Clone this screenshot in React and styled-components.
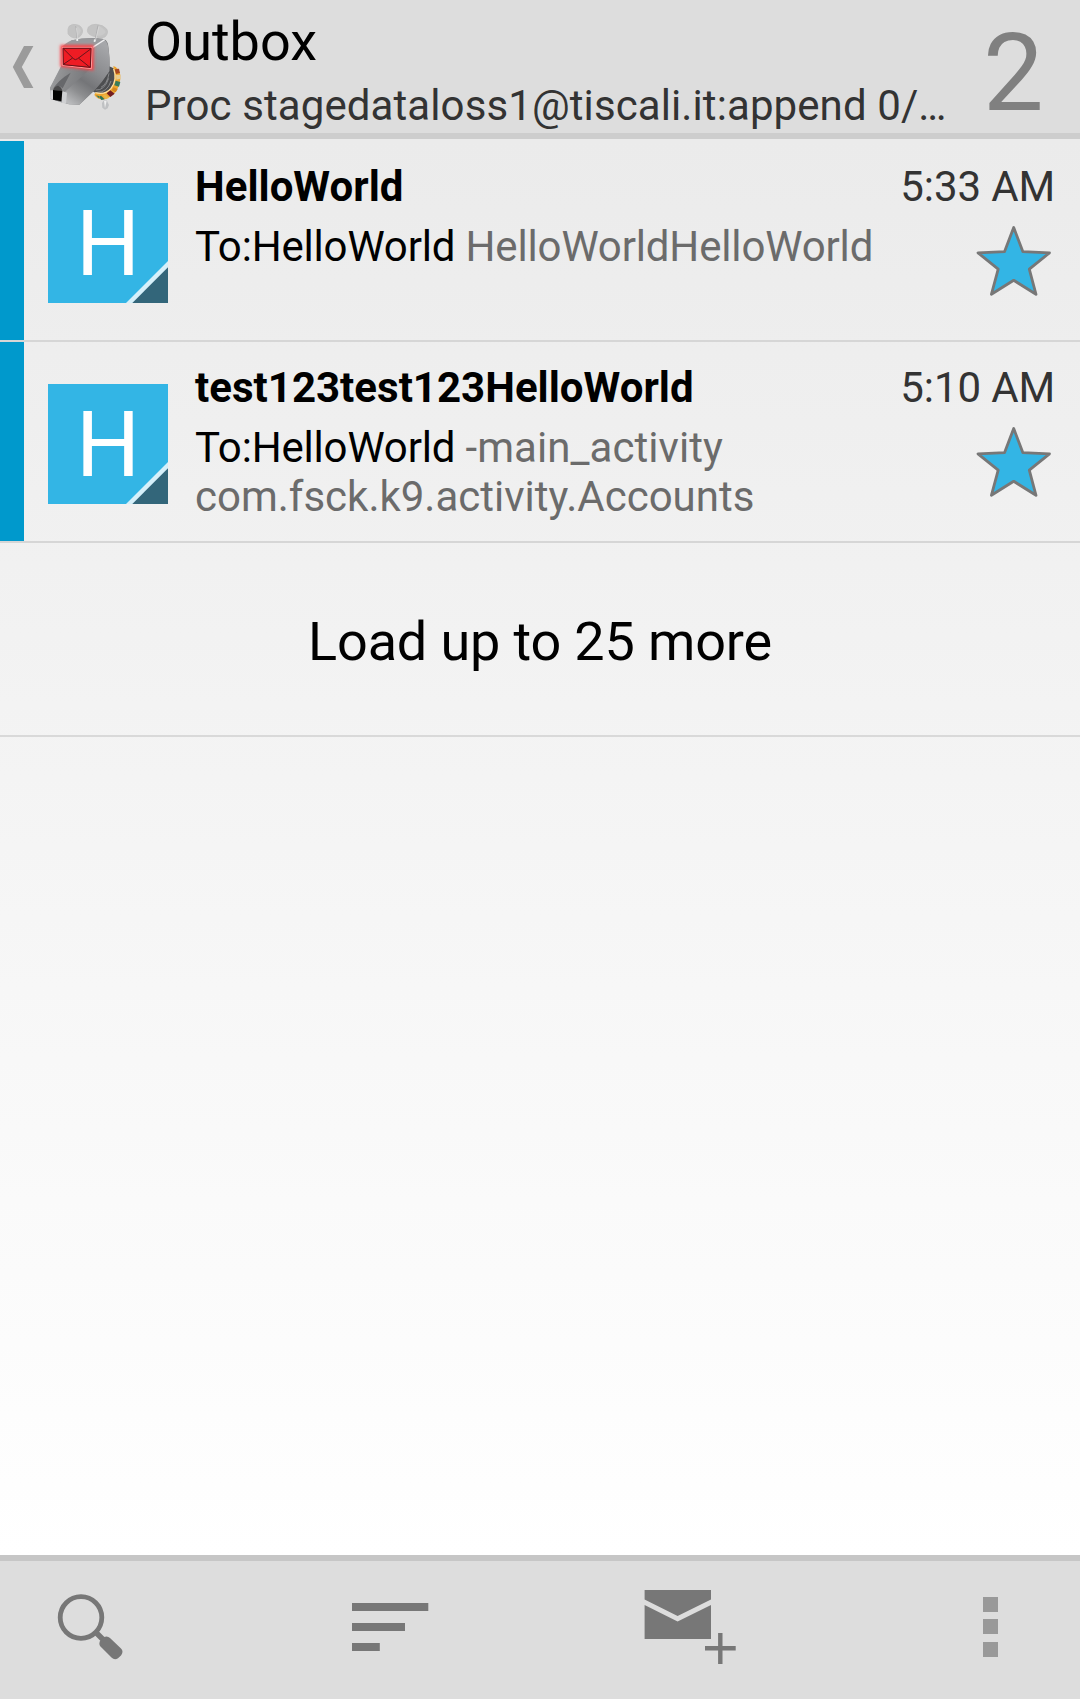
import React from "react";
import styled, { createGlobalStyle } from "styled-components";

const GlobalStyle = createGlobalStyle`
  * { box-sizing: border-box; }
  html, body { margin: 0; padding: 0; }
  body { font-family: Roboto, "Noto Sans", sans-serif; color: #000; }
`;

const Screen = styled.div`
  display: flex;
  flex-direction: column;
  width: 1080px;
  height: 1699px;
  overflow: hidden;
`;

const ActionBar = styled.header`
  display: flex;
  align-items: flex-start;
  height: 139px;
  flex: none;
  background: #ddd;
  border-bottom: 6px solid #cdcdcd;
`;

const UpButton = styled.div`
  display: flex;
  width: 145px;
  height: 133px;
  flex: none;
  padding: 20px 0 0 10px;

  svg { display: block; flex: none; }
`;

const TitleBlock = styled.div`
  flex: 1;
  min-width: 0;
  padding-top: 10px;
`;

const Title = styled.div`
  font-size: 54px;
  line-height: 63px;
`;

const Subtitle = styled.div`
  width: 808px;
  margin-top: 8px;
  font-size: 42px;
  line-height: 49px;
  letter-spacing: 0.1px;
  color: #333;
  white-space: nowrap;
`;

const UnreadCount = styled.div`
  flex: none;
  width: 97px;
  padding-top: 10px;
  font-size: 108px;
  line-height: 126px;
  color: #808080;
`;

const List = styled.main`
  flex: 1;
  min-height: 0;
  padding-top: 2px;
  background: linear-gradient(#ebebeb, #fff);
`;

const Row = styled.article`
  display: flex;
  height: 201px;
  border-bottom: 2px solid #d6d6d6;
`;

const AccountChip = styled.div`
  width: 24px;
  flex: none;
  background: #0099cc;
`;

const Avatar = styled.div`
  position: relative;
  width: 120px;
  height: 120px;
  flex: none;
  margin: 42px 27px 0 24px;
  background: #33b5e5;
  color: #fff;
  font-size: 90px;
  line-height: 124px;
  text-align: center;

  svg { position: absolute; right: 0; bottom: 0; }
`;

const Message = styled.div`
  flex: 1;
  min-width: 0;
  padding-top: 21px;
  font-size: 42px;
  line-height: 49px;
`;

const Subject = styled.div`
  font-weight: 700;
  letter-spacing: 0.02px;
  white-space: nowrap;
`;

const Preview = styled.div`
  margin-top: 11px;
  color: #6b6b6b;
  white-space: nowrap;
`;

const PreviewLine = styled.div`
  letter-spacing: ${(p) => p.$tracking}px;
`;

const Recipient = styled.span`
  color: #000;
  letter-spacing: -0.17px;
`;

const Meta = styled.div`
  display: flex;
  flex-direction: column;
  align-items: flex-end;
  flex: none;
  padding: 21px 25px 0 0;
  font-size: 42px;
  line-height: 49px;
  letter-spacing: -0.12px;
  color: #333;
  white-space: nowrap;

  svg { display: block; margin: 10px 2px 0 0; }
`;

const LoadMore = styled.div`
  height: 194px;
  padding-top: 67px;
  border-bottom: 2px solid #d9d9d9;
  font-size: 54px;
  line-height: 63px;
  letter-spacing: -0.15px;
  text-align: center;
`;

const Toolbar = styled.footer`
  display: grid;
  grid-template-columns: 300px 293px 341px 25px;
  height: 144px;
  flex: none;
  padding: 21px 0 0 49px;
  background: #ddd;
  border-top: 6px solid #c6c6c6;
`;

const ToolButton = styled.div`
  svg { display: block; }
`;

function UpChevron() {
  return (
    <svg width="26" height="80" viewBox="10 20 26 80">
      <path d="M24 46H33.4L21.8 67L33.4 88H24L12.8 67Z" fill="#9b9b9b" />
    </svg>
  );
}

function DogLogo() {
  return (
    <svg width="90" height="94" viewBox="108 60 270 282">
      <defs>
        <linearGradient id="skull" gradientUnits="userSpaceOnUse" x1="150" y1="150" x2="275" y2="220">
          <stop offset="0" stopColor="#a8a8aa" />
          <stop offset="1" stopColor="#77787a" />
        </linearGradient>
        <linearGradient id="snout" gradientUnits="userSpaceOnUse" x1="165" y1="225" x2="245" y2="245">
          <stop offset="0" stopColor="#98999b" />
          <stop offset="0.4" stopColor="#8a8b8d" />
          <stop offset="1" stopColor="#7b7c7f" />
        </linearGradient>
        <linearGradient id="cheek" gradientUnits="userSpaceOnUse" x1="320" y1="140" x2="205" y2="305">
          <stop offset="0" stopColor="#a6a7aa" />
          <stop offset="0.4" stopColor="#8a8b8e" />
          <stop offset="0.62" stopColor="#747578" />
          <stop offset="0.8" stopColor="#8d8e90" />
          <stop offset="1" stopColor="#b8b9bb" />
        </linearGradient>
        <filter id="glow" x="-30%" y="-30%" width="160%" height="160%">
          <feGaussianBlur stdDeviation="5" />
        </filter>
      </defs>
      <path d="M306 308L312 301L320 301L327 315L323 325L315 329L307 323Z" fill="#bfc1c3" />
      <path d="M312 302L320 302L315 325Z" fill="#eee" />
      <path d="M270 270L326 198L344 206Q353 240 333 269Q314 291 283 277Z" fill="#4d4e50" />
      <path d="M287 270Q314 272 326 235M291 277Q322 278 333 243M303 262Q322 252 327 220" fill="none" stroke="#929395" strokeWidth="2.5" />
      <path d="M340 198Q356 202 361 225Q363 249 349 273Q332 295 308 299Q291 297 283 285L286 278Q316 286 333 265Q353 239 341 206Z" fill="#eea52e" />
      <path d="M341 206Q353 239 333 265Q316 286 286 278" fill="none" stroke="#ffe0a0" strokeWidth="4" />
      <path d="M344 208L357 206L360 219L348 222Z" fill="#a64822" />
      <path d="M348 225L360 224L361 236L349 239Z" fill="#e7cd90" />
      <path d="M347 242L361 246L357 260L343 256Z" fill="#397c5a" />
      <path d="M340 262L353 267L347 277L335 271Z" fill="#d4871f" />
      <path d="M331 271L344 281L331 291L320 280Z" fill="#721d20" />
      <path d="M316 283L327 294L317 298L309 286Z" fill="#e8b74a" />
      <path d="M303 287L314 298L304 300L297 290Z" fill="#2b7455" />
      <path d="M288 286L297 288L298 296Z" fill="#387c5b" />
      <path d="M215 121Q260 111 307 116Q320 117 324 132Q331 177 328 213Q308 244 282 272L238 314L207 313L150 296V265L186 197L185 143Q195 129 215 121Z" fill="url(#skull)" />
      <path d="M186 193L273 205L201 277L188 308L150 296V263Z" fill="url(#snout)" />
      <path d="M273 205L279 142L314 120Q324 127 326 150Q331 181 328 214Q307 247 282 272L238 314L207 313L186 307L195 275Z" fill="url(#cheek)" />
      <path d="M188 143L277 142L313 118Q267 110 215 121Z" fill="#999a9d" />
      <path d="M278 142L314 119" stroke="#efeff0" strokeWidth="4" />
      <path d="M212 218L188 265Q172 250 158 268Q175 240 212 218Z" fill="#67686b" />
      <path d="M151 271L159 271V298L150 296Z" fill="#d6d6d8" />
      <path d="M186 273L201 278L198 311L185 308Z" fill="#cfd0d2" />
      <path d="M159 271Q162 258 174 257Q185 260 187 274Z" fill="#4a4a4b" />
      <path d="M159 270L187 273L184 304L159 299Z" fill="#030303" />
      <g fill="#c3c3c3" stroke="#bcbcbc" strokeWidth="2">
        <path d="M207 79Q217 70 230 74Q246 77 248 93Q246 109 231 114Q212 115 204 101Q202 87 207 79Z" />
        <path d="M265 81Q274 72 288 73Q309 74 320 87Q327 99 315 111Q303 117 285 110Q262 105 262 91Z" />
      </g>
      <path d="M224 77Q239 78 243 92Q239 105 230 110ZM293 78Q313 83 317 97Q307 111 286 106Z" fill="#cacaca" />
      <path d="M227 78L232 123M294 76L284 126" fill="none" stroke="#a9aaab" strokeWidth="2.5" />
      <path d="M229 84L234 122M297 79L286 123" fill="none" stroke="#dcdcdc" strokeWidth="2" />
      <path d="M229 116L234 116V123L229 123ZM282 118L287 119L286 126L281 125Z" fill="#f1f1f1" />
      <path d="M185 139H277V207L185 197Z" fill="#ff1c24" stroke="#ff4146" strokeWidth="8" filter="url(#glow)" />
      <path d="M187 142L276 142L274 206L187 196Z" fill="#ed1c24" stroke="#ff9999" strokeWidth="3" />
      <path d="M189 145H273L271 202L190 194Z" fill="#ee1c24" stroke="#65151b" strokeWidth="3" />
      <path d="M190 146L220 176Q226 182 233 176L272 147M190 193L218 174M236 175L270 202" fill="none" stroke="#65151b" strokeWidth="3" />
    </svg>
  );
}

function ContactCorner() {
  return (
    <svg width="42" height="42" viewBox="0 0 42 42">
      <path d="M42 0V42H0Z" fill="#d6f0fa" />
      <path d="M42 6.3V42H6.3Z" fill="#33667a" />
    </svg>
  );
}

function Star() {
  return (
    <svg width="78" height="78" viewBox="975 222 78 78">
      <path
        d="M1013.7 228.5L1022.8 252.6L1049.5 253.8L1029.3 270.2L1036 295.3L1013.7 281.3L991.4 295.3L998.2 270.2L978 253.8L1004.6 252.6Z"
        fill="#33b5e5"
        stroke="#777"
        strokeWidth="2.8"
        strokeLinejoin="round"
      />
    </svg>
  );
}

function SearchIcon() {
  return (
    <svg width="80" height="90" viewBox="49 1582 80 90">
      <circle cx="81" cy="1617.5" r="20.8" fill="none" stroke="#777" strokeWidth="4.8" />
      <path d="M95 1631.5L105 1641.5" stroke="#777" strokeWidth="5.5" />
      <path d="M104 1637Q107.5 1635.5 110 1638L121 1648.5Q124 1651.5 121 1655.5L118 1658.2Q114.5 1660.5 111.5 1657.5L100 1646Q98.8 1644.5 99.7 1641.5Z" fill="#777" />
    </svg>
  );
}

function SortIcon() {
  return (
    <svg width="86" height="90" viewBox="349 1582 86 90">
      <path d="M352 1603H428.3V1611H352ZM352 1623H405V1631H352ZM352 1643H379.8V1651H352Z" fill="#777" />
    </svg>
  );
}

function ComposeIcon() {
  return (
    <svg width="98" height="90" viewBox="642 1582 98 90">
      <path d="M644.6 1590H711V1599.5L677.6 1616L644.6 1599.5ZM644.6 1605L677.6 1621.5L711 1605V1639H644.6Z" fill="#777" />
      <path d="M705 1648.3H735.7M720.3 1633V1664" fill="none" stroke="#777" strokeWidth="4.4" />
    </svg>
  );
}

function OverflowIcon() {
  return (
    <svg width="25" height="90" viewBox="983 1582 25 90">
      <path d="M983 1597H998V1612H983ZM983 1619H998V1634H983ZM983 1642H998V1657H983Z" fill="#999" />
    </svg>
  );
}

const messages = [
  {
    subject: "HelloWorld",
    preview: [{ text: "HelloWorldHelloWorld", tracking: -0.15 }],
    time: "5:33 AM",
  },
  {
    subject: "test123test123HelloWorld",
    preview: [
      { text: "-main_activity", tracking: 0.06 },
      { text: "com.fsck.k9.activity.Accounts", tracking: 0 },
    ],
    time: "5:10 AM",
  },
];

const tools = [
  { name: "search", Icon: SearchIcon },
  { name: "sort", Icon: SortIcon },
  { name: "compose", Icon: ComposeIcon },
  { name: "more", Icon: OverflowIcon },
];

export default function App() {
  return (
    <Screen>
      <GlobalStyle />
      <ActionBar>
        <UpButton>
          <UpChevron />
          <DogLogo />
        </UpButton>
        <TitleBlock>
          <Title>Outbox</Title>
          <Subtitle>Proc stagedataloss1@tiscali.it:append 0/…</Subtitle>
        </TitleBlock>
        <UnreadCount>2</UnreadCount>
      </ActionBar>
      <List>
        {messages.map((m) => (
          <Row key={m.time}>
            <AccountChip />
            <Avatar>
              H
              <ContactCorner />
            </Avatar>
            <Message>
              <Subject>{m.subject}</Subject>
              <Preview>
                {m.preview.map((line, i) => (
                  <PreviewLine key={line.text} $tracking={line.tracking}>
                    {i === 0 && <Recipient>To:HelloWorld </Recipient>}
                    {line.text}
                  </PreviewLine>
                ))}
              </Preview>
            </Message>
            <Meta>
              {m.time}
              <Star />
            </Meta>
          </Row>
        ))}
        <LoadMore>Load up to 25 more</LoadMore>
      </List>
      <Toolbar>
        {tools.map(({ name, Icon }) => (
          <ToolButton key={name}>
            <Icon />
          </ToolButton>
        ))}
      </Toolbar>
    </Screen>
  );
}
